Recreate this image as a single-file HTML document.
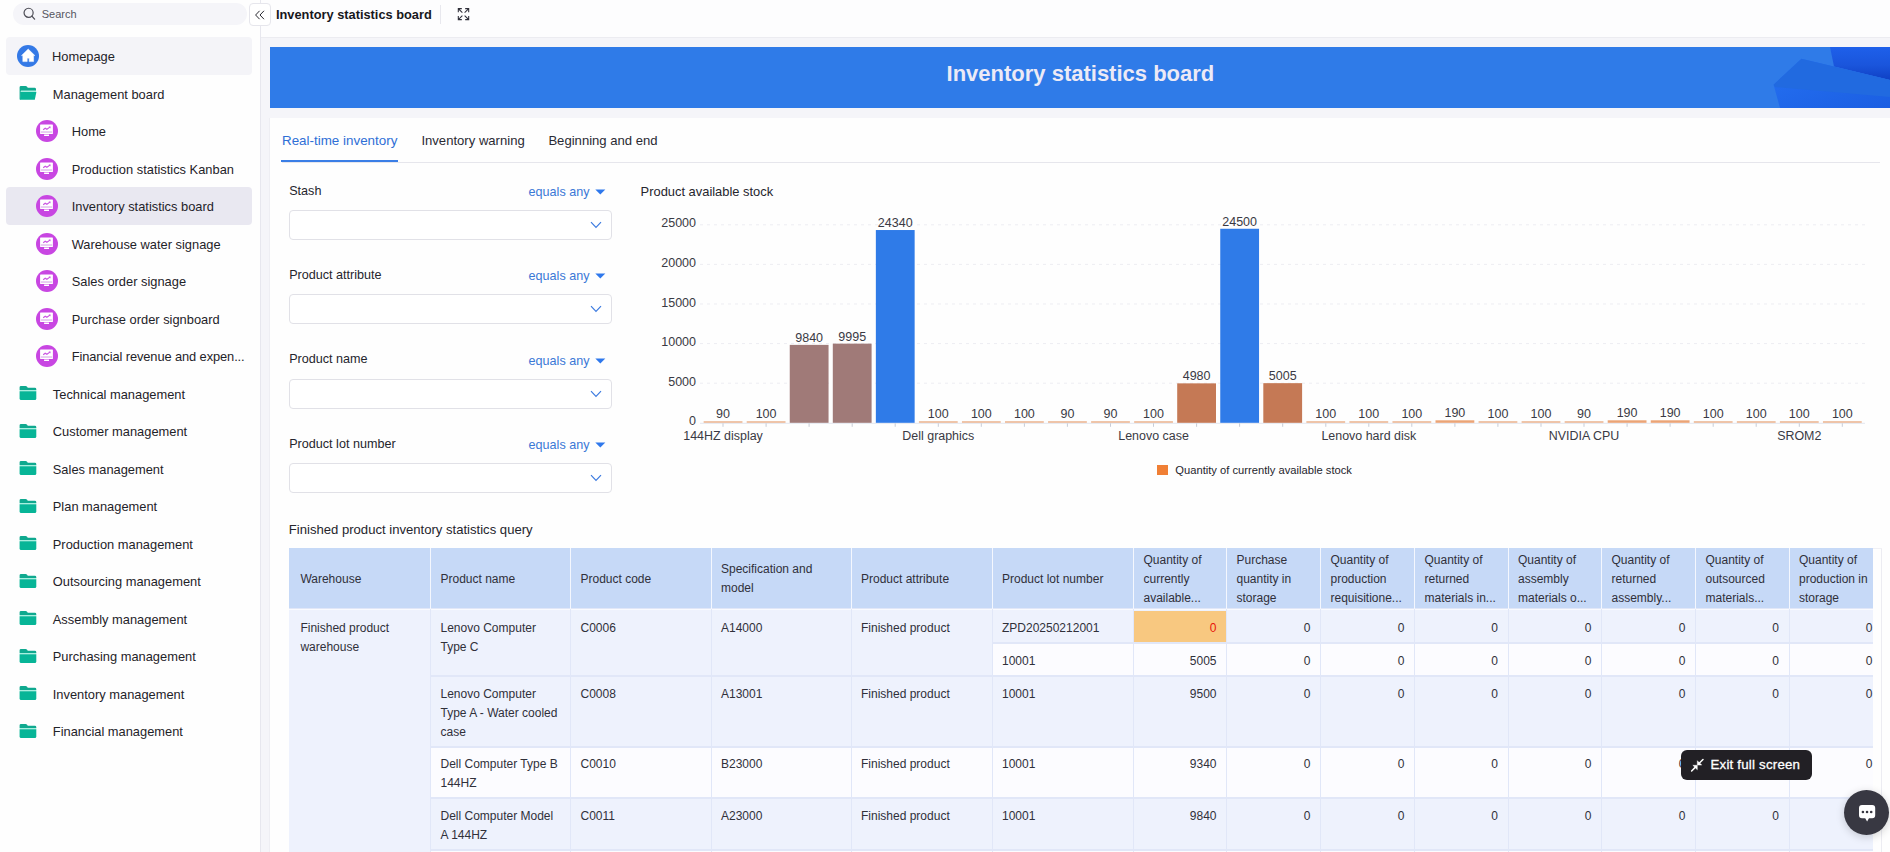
<!DOCTYPE html>
<html><head><meta charset="utf-8"><title>Inventory statistics board</title>
<style>
html,body{margin:0;padding:0;width:1890px;height:852px;overflow:hidden;background:#fefefe;}
body{position:relative;font-family:"Liberation Sans",sans-serif;}
.b{position:absolute;}
.t{position:absolute;white-space:nowrap;}
</style></head><body>
<div class="b" style="left:0px;top:0px;width:260px;height:852px;background:#fefefe;"></div>
<div class="b" style="left:260px;top:0px;width:1px;height:852px;background:#e7e7ee;"></div>
<div class="b" style="left:13px;top:2.5px;width:234px;height:22px;background:#f5f5f9;border-radius:11px;"></div>
<svg class="b" style="left:23px;top:7px" width="14" height="14" viewBox="0 0 14 14"><circle cx="5.6" cy="5.8" r="4.55" fill="none" stroke="#4d4d56" stroke-width="1.2"/><path d="M8.9 9.1 L11.6 12.1" stroke="#4d4d56" stroke-width="1.3" stroke-linecap="round"/></svg>
<div class="t" style="left:41.70px;top:6.99px;font-size:11px;line-height:15px;color:#55555f;">Search</div>
<div class="b" style="left:6px;top:37px;width:246px;height:38px;background:#f4f4f8;border-radius:4px;"></div>
<div class="b" style="left:6px;top:187px;width:246px;height:37.5px;background:#e9e8f1;border-radius:4px;"></div>
<svg class="b" style="left:17px;top:45px" width="22" height="22" viewBox="0 0 22 22"><circle cx="11" cy="11" r="11" fill="#3479e6"/><path d="M11.2 4 L17.9 10.6 L16.6 10.6 L16.6 16.6 L12.2 16.6 L12.2 13.2 L10.2 13.2 L10.2 16.6 L5.8 16.6 L5.8 10.6 L4.5 10.6 Z" fill="#fff" stroke="#fff" stroke-width="0.5" stroke-linejoin="round"/></svg>
<div class="t" style="left:52.00px;top:48.24px;font-size:12.87px;line-height:18px;color:#1f2329;">Homepage</div>
<svg class="b" style="left:18px;top:85px" width="20" height="17" viewBox="0 0 20 17"><path d="M1.6 2.3 Q1.6 0.9 3 0.9 L7.6 0.9 Q8.4 0.9 8.9 1.6 L9.8 2.8 L16.6 2.8 Q18 2.8 18 4.2 L18 5.8 L3 5.8 L2.6 14.6 L1.6 14.6 Z" fill="#0fa98f"/><path d="M2.7 5.8 L18.2 5.8 L18.2 7 L2.6 7 Z" fill="#a8efdf"/><path d="M2.7 7 L18.4 7 L16.8 14.8 L2 14.8 Z" fill="#07b597"/></svg>
<div class="t" style="left:52.80px;top:85.74px;font-size:12.87px;line-height:18px;color:#1f2329;">Management board</div>
<svg class="b" style="left:36px;top:120px" width="22" height="22" viewBox="0 0 22 22"><circle cx="11" cy="11" r="11" fill="#c846e2"/><rect x="4.1" y="4.6" width="12.8" height="9.3" rx="0.5" fill="#fff"/><rect x="4.8" y="11.1" width="11.4" height="1.9" fill="#e7cdf1"/><path d="M7.2 9.7 L9.2 8.2 L10.9 9.3 L13.9 7.1" fill="none" stroke="#c955e2" stroke-width="1.15"/><path d="M12.6 6.6 L14.6 6.6 L14.4 8.6 Z" fill="#c955e2"/><rect x="8.1" y="14.5" width="4.9" height="1.5" fill="#fff"/></svg>
<div class="t" style="left:71.70px;top:123.24px;font-size:12.87px;line-height:18px;color:#1f2329;">Home</div>
<svg class="b" style="left:36px;top:158px" width="22" height="22" viewBox="0 0 22 22"><circle cx="11" cy="11" r="11" fill="#c846e2"/><rect x="4.1" y="4.6" width="12.8" height="9.3" rx="0.5" fill="#fff"/><rect x="4.8" y="11.1" width="11.4" height="1.9" fill="#e7cdf1"/><path d="M7.2 9.7 L9.2 8.2 L10.9 9.3 L13.9 7.1" fill="none" stroke="#c955e2" stroke-width="1.15"/><path d="M12.6 6.6 L14.6 6.6 L14.4 8.6 Z" fill="#c955e2"/><rect x="8.1" y="14.5" width="4.9" height="1.5" fill="#fff"/></svg>
<div class="t" style="left:71.70px;top:160.74px;font-size:12.87px;line-height:18px;color:#1f2329;">Production statistics Kanban</div>
<svg class="b" style="left:36px;top:195px" width="22" height="22" viewBox="0 0 22 22"><circle cx="11" cy="11" r="11" fill="#c846e2"/><rect x="4.1" y="4.6" width="12.8" height="9.3" rx="0.5" fill="#fff"/><rect x="4.8" y="11.1" width="11.4" height="1.9" fill="#e7cdf1"/><path d="M7.2 9.7 L9.2 8.2 L10.9 9.3 L13.9 7.1" fill="none" stroke="#c955e2" stroke-width="1.15"/><path d="M12.6 6.6 L14.6 6.6 L14.4 8.6 Z" fill="#c955e2"/><rect x="8.1" y="14.5" width="4.9" height="1.5" fill="#fff"/></svg>
<div class="t" style="left:71.70px;top:198.24px;font-size:12.87px;line-height:18px;color:#1f2329;">Inventory statistics board</div>
<svg class="b" style="left:36px;top:233px" width="22" height="22" viewBox="0 0 22 22"><circle cx="11" cy="11" r="11" fill="#c846e2"/><rect x="4.1" y="4.6" width="12.8" height="9.3" rx="0.5" fill="#fff"/><rect x="4.8" y="11.1" width="11.4" height="1.9" fill="#e7cdf1"/><path d="M7.2 9.7 L9.2 8.2 L10.9 9.3 L13.9 7.1" fill="none" stroke="#c955e2" stroke-width="1.15"/><path d="M12.6 6.6 L14.6 6.6 L14.4 8.6 Z" fill="#c955e2"/><rect x="8.1" y="14.5" width="4.9" height="1.5" fill="#fff"/></svg>
<div class="t" style="left:71.70px;top:235.74px;font-size:12.87px;line-height:18px;color:#1f2329;">Warehouse water signage</div>
<svg class="b" style="left:36px;top:270px" width="22" height="22" viewBox="0 0 22 22"><circle cx="11" cy="11" r="11" fill="#c846e2"/><rect x="4.1" y="4.6" width="12.8" height="9.3" rx="0.5" fill="#fff"/><rect x="4.8" y="11.1" width="11.4" height="1.9" fill="#e7cdf1"/><path d="M7.2 9.7 L9.2 8.2 L10.9 9.3 L13.9 7.1" fill="none" stroke="#c955e2" stroke-width="1.15"/><path d="M12.6 6.6 L14.6 6.6 L14.4 8.6 Z" fill="#c955e2"/><rect x="8.1" y="14.5" width="4.9" height="1.5" fill="#fff"/></svg>
<div class="t" style="left:71.70px;top:273.24px;font-size:12.87px;line-height:18px;color:#1f2329;">Sales order signage</div>
<svg class="b" style="left:36px;top:308px" width="22" height="22" viewBox="0 0 22 22"><circle cx="11" cy="11" r="11" fill="#c846e2"/><rect x="4.1" y="4.6" width="12.8" height="9.3" rx="0.5" fill="#fff"/><rect x="4.8" y="11.1" width="11.4" height="1.9" fill="#e7cdf1"/><path d="M7.2 9.7 L9.2 8.2 L10.9 9.3 L13.9 7.1" fill="none" stroke="#c955e2" stroke-width="1.15"/><path d="M12.6 6.6 L14.6 6.6 L14.4 8.6 Z" fill="#c955e2"/><rect x="8.1" y="14.5" width="4.9" height="1.5" fill="#fff"/></svg>
<div class="t" style="left:71.70px;top:310.74px;font-size:12.87px;line-height:18px;color:#1f2329;">Purchase order signboard</div>
<svg class="b" style="left:36px;top:345px" width="22" height="22" viewBox="0 0 22 22"><circle cx="11" cy="11" r="11" fill="#c846e2"/><rect x="4.1" y="4.6" width="12.8" height="9.3" rx="0.5" fill="#fff"/><rect x="4.8" y="11.1" width="11.4" height="1.9" fill="#e7cdf1"/><path d="M7.2 9.7 L9.2 8.2 L10.9 9.3 L13.9 7.1" fill="none" stroke="#c955e2" stroke-width="1.15"/><path d="M12.6 6.6 L14.6 6.6 L14.4 8.6 Z" fill="#c955e2"/><rect x="8.1" y="14.5" width="4.9" height="1.5" fill="#fff"/></svg>
<div class="t" style="left:71.70px;top:348.24px;font-size:12.87px;line-height:18px;color:#1f2329;letter-spacing:-0.1px;">Financial revenue and expen...</div>
<svg class="b" style="left:18px;top:385px" width="20" height="17" viewBox="0 0 20 17"><path d="M1.6 2.3 Q1.6 0.9 3 0.9 L7.6 0.9 Q8.4 0.9 8.9 1.6 L9.8 2.8 L16.9 2.8 Q18.3 2.8 18.3 4.2 L18.3 5 L1.6 5 Z" fill="#0fa98f"/><rect x="1.6" y="5" width="16.7" height="1.3" fill="#a8efdf"/><path d="M1.6 6.3 L18.3 6.3 L18.3 13.4 Q18.3 14.9 16.8 14.9 L3.1 14.9 Q1.6 14.9 1.6 13.4 Z" fill="#07b597"/></svg>
<div class="t" style="left:52.80px;top:385.74px;font-size:12.87px;line-height:18px;color:#1f2329;">Technical management</div>
<svg class="b" style="left:18px;top:423px" width="20" height="17" viewBox="0 0 20 17"><path d="M1.6 2.3 Q1.6 0.9 3 0.9 L7.6 0.9 Q8.4 0.9 8.9 1.6 L9.8 2.8 L16.9 2.8 Q18.3 2.8 18.3 4.2 L18.3 5 L1.6 5 Z" fill="#0fa98f"/><rect x="1.6" y="5" width="16.7" height="1.3" fill="#a8efdf"/><path d="M1.6 6.3 L18.3 6.3 L18.3 13.4 Q18.3 14.9 16.8 14.9 L3.1 14.9 Q1.6 14.9 1.6 13.4 Z" fill="#07b597"/></svg>
<div class="t" style="left:52.80px;top:423.24px;font-size:12.87px;line-height:18px;color:#1f2329;">Customer management</div>
<svg class="b" style="left:18px;top:460px" width="20" height="17" viewBox="0 0 20 17"><path d="M1.6 2.3 Q1.6 0.9 3 0.9 L7.6 0.9 Q8.4 0.9 8.9 1.6 L9.8 2.8 L16.9 2.8 Q18.3 2.8 18.3 4.2 L18.3 5 L1.6 5 Z" fill="#0fa98f"/><rect x="1.6" y="5" width="16.7" height="1.3" fill="#a8efdf"/><path d="M1.6 6.3 L18.3 6.3 L18.3 13.4 Q18.3 14.9 16.8 14.9 L3.1 14.9 Q1.6 14.9 1.6 13.4 Z" fill="#07b597"/></svg>
<div class="t" style="left:52.80px;top:460.74px;font-size:12.87px;line-height:18px;color:#1f2329;">Sales management</div>
<svg class="b" style="left:18px;top:498px" width="20" height="17" viewBox="0 0 20 17"><path d="M1.6 2.3 Q1.6 0.9 3 0.9 L7.6 0.9 Q8.4 0.9 8.9 1.6 L9.8 2.8 L16.9 2.8 Q18.3 2.8 18.3 4.2 L18.3 5 L1.6 5 Z" fill="#0fa98f"/><rect x="1.6" y="5" width="16.7" height="1.3" fill="#a8efdf"/><path d="M1.6 6.3 L18.3 6.3 L18.3 13.4 Q18.3 14.9 16.8 14.9 L3.1 14.9 Q1.6 14.9 1.6 13.4 Z" fill="#07b597"/></svg>
<div class="t" style="left:52.80px;top:498.24px;font-size:12.87px;line-height:18px;color:#1f2329;">Plan management</div>
<svg class="b" style="left:18px;top:535px" width="20" height="17" viewBox="0 0 20 17"><path d="M1.6 2.3 Q1.6 0.9 3 0.9 L7.6 0.9 Q8.4 0.9 8.9 1.6 L9.8 2.8 L16.9 2.8 Q18.3 2.8 18.3 4.2 L18.3 5 L1.6 5 Z" fill="#0fa98f"/><rect x="1.6" y="5" width="16.7" height="1.3" fill="#a8efdf"/><path d="M1.6 6.3 L18.3 6.3 L18.3 13.4 Q18.3 14.9 16.8 14.9 L3.1 14.9 Q1.6 14.9 1.6 13.4 Z" fill="#07b597"/></svg>
<div class="t" style="left:52.80px;top:535.74px;font-size:12.87px;line-height:18px;color:#1f2329;">Production management</div>
<svg class="b" style="left:18px;top:573px" width="20" height="17" viewBox="0 0 20 17"><path d="M1.6 2.3 Q1.6 0.9 3 0.9 L7.6 0.9 Q8.4 0.9 8.9 1.6 L9.8 2.8 L16.9 2.8 Q18.3 2.8 18.3 4.2 L18.3 5 L1.6 5 Z" fill="#0fa98f"/><rect x="1.6" y="5" width="16.7" height="1.3" fill="#a8efdf"/><path d="M1.6 6.3 L18.3 6.3 L18.3 13.4 Q18.3 14.9 16.8 14.9 L3.1 14.9 Q1.6 14.9 1.6 13.4 Z" fill="#07b597"/></svg>
<div class="t" style="left:52.80px;top:573.24px;font-size:12.87px;line-height:18px;color:#1f2329;">Outsourcing management</div>
<svg class="b" style="left:18px;top:610px" width="20" height="17" viewBox="0 0 20 17"><path d="M1.6 2.3 Q1.6 0.9 3 0.9 L7.6 0.9 Q8.4 0.9 8.9 1.6 L9.8 2.8 L16.9 2.8 Q18.3 2.8 18.3 4.2 L18.3 5 L1.6 5 Z" fill="#0fa98f"/><rect x="1.6" y="5" width="16.7" height="1.3" fill="#a8efdf"/><path d="M1.6 6.3 L18.3 6.3 L18.3 13.4 Q18.3 14.9 16.8 14.9 L3.1 14.9 Q1.6 14.9 1.6 13.4 Z" fill="#07b597"/></svg>
<div class="t" style="left:52.80px;top:610.74px;font-size:12.87px;line-height:18px;color:#1f2329;">Assembly management</div>
<svg class="b" style="left:18px;top:648px" width="20" height="17" viewBox="0 0 20 17"><path d="M1.6 2.3 Q1.6 0.9 3 0.9 L7.6 0.9 Q8.4 0.9 8.9 1.6 L9.8 2.8 L16.9 2.8 Q18.3 2.8 18.3 4.2 L18.3 5 L1.6 5 Z" fill="#0fa98f"/><rect x="1.6" y="5" width="16.7" height="1.3" fill="#a8efdf"/><path d="M1.6 6.3 L18.3 6.3 L18.3 13.4 Q18.3 14.9 16.8 14.9 L3.1 14.9 Q1.6 14.9 1.6 13.4 Z" fill="#07b597"/></svg>
<div class="t" style="left:52.80px;top:648.24px;font-size:12.87px;line-height:18px;color:#1f2329;">Purchasing management</div>
<svg class="b" style="left:18px;top:685px" width="20" height="17" viewBox="0 0 20 17"><path d="M1.6 2.3 Q1.6 0.9 3 0.9 L7.6 0.9 Q8.4 0.9 8.9 1.6 L9.8 2.8 L16.9 2.8 Q18.3 2.8 18.3 4.2 L18.3 5 L1.6 5 Z" fill="#0fa98f"/><rect x="1.6" y="5" width="16.7" height="1.3" fill="#a8efdf"/><path d="M1.6 6.3 L18.3 6.3 L18.3 13.4 Q18.3 14.9 16.8 14.9 L3.1 14.9 Q1.6 14.9 1.6 13.4 Z" fill="#07b597"/></svg>
<div class="t" style="left:52.80px;top:685.74px;font-size:12.87px;line-height:18px;color:#1f2329;">Inventory management</div>
<svg class="b" style="left:18px;top:723px" width="20" height="17" viewBox="0 0 20 17"><path d="M1.6 2.3 Q1.6 0.9 3 0.9 L7.6 0.9 Q8.4 0.9 8.9 1.6 L9.8 2.8 L16.9 2.8 Q18.3 2.8 18.3 4.2 L18.3 5 L1.6 5 Z" fill="#0fa98f"/><rect x="1.6" y="5" width="16.7" height="1.3" fill="#a8efdf"/><path d="M1.6 6.3 L18.3 6.3 L18.3 13.4 Q18.3 14.9 16.8 14.9 L3.1 14.9 Q1.6 14.9 1.6 13.4 Z" fill="#07b597"/></svg>
<div class="t" style="left:52.80px;top:723.24px;font-size:12.87px;line-height:18px;color:#1f2329;">Financial management</div>
<div class="b" style="left:261px;top:0px;width:1629px;height:37px;background:#fdfdfe;"></div>
<div class="b" style="left:248.5px;top:3px;width:22.5px;height:23px;background:#fff;border:1px solid #e6e6ec;border-radius:4px;box-sizing:border-box;"></div>
<svg class="b" style="left:254px;top:8.5px" width="12" height="12" viewBox="0 0 12 12"><path d="M5.6 1.8 L1.6 6 L5.6 10.2 M10 1.8 L6 6 L10 10.2" fill="none" stroke="#1c1c24" stroke-width="0.95"/></svg>
<div class="t" style="left:276.00px;top:5.96px;font-size:12.8px;line-height:18px;color:#17171c;font-weight:700;">Inventory statistics board</div>
<div class="b" style="left:440px;top:5px;width:1px;height:19px;background:#e8e8ee;"></div>
<svg class="b" style="left:457px;top:7px" width="13" height="14" viewBox="0 0 13 14"><g fill="none" stroke="#30303a" stroke-width="1.05" stroke-linecap="square"><path d="M1.3 4.6 L1.3 1.6 L4.3 1.6 M1.6 1.9 L5 5.3"/><path d="M11.7 4.6 L11.7 1.6 L8.7 1.6 M11.4 1.9 L8 5.3"/><path d="M1.3 9.6 L1.3 12.6 L4.3 12.6 M1.6 12.3 L5 8.9"/><path d="M11.7 9.6 L11.7 12.6 L8.7 12.6 M11.4 12.3 L8 8.9"/></g></svg>
<div class="b" style="left:261px;top:37px;width:1629px;height:815px;background:#f5f5f9;"></div>
<div class="b" style="left:261px;top:37px;width:1629px;height:1px;background:#ececf1;"></div>
<div class="b" style="left:270px;top:47px;width:1620px;height:61px;background:#2f7be8;overflow:hidden;"></div>
<svg class="b" style="left:1760px;top:47px" width="130" height="61" viewBox="0 0 130 61"><defs><linearGradient id="g1" x1="0" y1="0" x2="0" y2="1"><stop offset="0" stop-color="#1e60ea"/><stop offset="0.55" stop-color="#1a55dc"/><stop offset="1" stop-color="#0f40c4"/></linearGradient><linearGradient id="g2" x1="0" y1="0" x2="1" y2="1"><stop offset="0" stop-color="#2571f2"/><stop offset="1" stop-color="#1b5ee2"/></linearGradient></defs><path d="M70 0 L130 0 L130 33 L74 19.5 Z" fill="url(#g1)"/><path d="M13.6 37.7 L41.4 11.7 L130 33 L130 61 L20 61 Z" fill="url(#g2)"/><path d="M13.6 37.7 L41.4 11.7 L130 33 L130 50 L15 40 Z" fill="#216ae0"/></svg>
<div class="t" style="left:880.40px;top:59.38px;font-size:22px;line-height:30px;color:#eceaf6;font-weight:700;text-align:center;width:400px;">Inventory statistics board</div>
<div class="b" style="left:269px;top:118px;width:1px;height:734px;background:#eeeef3;"></div>
<div class="b" style="left:270px;top:118px;width:1620px;height:734px;background:#fefefe;"></div>
<div class="t" style="left:282.00px;top:130.66px;font-size:13.4px;line-height:19px;color:#2f6fd6;">Real-time inventory</div>
<div class="t" style="left:421.40px;top:131.86px;font-size:13.1px;line-height:18px;color:#2a2a33;">Inventory warning</div>
<div class="t" style="left:548.40px;top:131.86px;font-size:13.1px;line-height:18px;color:#2a2a33;">Beginning and end</div>
<div class="b" style="left:282px;top:162px;width:1598px;height:1px;background:#e6e6ec;"></div>
<div class="b" style="left:281px;top:160px;width:117px;height:2px;background:#3a7ee6;"></div>
<div class="t" style="left:289.20px;top:181.53px;font-size:12.6px;line-height:18px;color:#25252d;">Stash</div>
<div class="t" style="left:528.60px;top:182.93px;font-size:12.6px;line-height:18px;color:#3b78d6;">equals any</div>
<svg class="b" style="left:595px;top:189px" width="11" height="7" viewBox="0 0 11 7"><path d="M0.3 0.4 L10.3 0.4 L5.3 5.6 Z" fill="#2f78ec"/></svg>
<div class="b" style="left:289px;top:210px;width:323px;height:30px;border:1px solid #e1e1e7;border-radius:4px;box-sizing:border-box;background:#fff;"></div>
<svg class="b" style="left:590px;top:221px" width="12" height="8" viewBox="0 0 12 8"><path d="M1 1.2 L6 6.3 L11 1.2" fill="none" stroke="#3d7be0" stroke-width="1.2"/></svg>
<div class="t" style="left:289.20px;top:265.98px;font-size:12.6px;line-height:18px;color:#25252d;">Product attribute</div>
<div class="t" style="left:528.60px;top:267.38px;font-size:12.6px;line-height:18px;color:#3b78d6;">equals any</div>
<svg class="b" style="left:595px;top:273px" width="11" height="7" viewBox="0 0 11 7"><path d="M0.3 0.4 L10.3 0.4 L5.3 5.6 Z" fill="#2f78ec"/></svg>
<div class="b" style="left:289px;top:294px;width:323px;height:30px;border:1px solid #e1e1e7;border-radius:4px;box-sizing:border-box;background:#fff;"></div>
<svg class="b" style="left:590px;top:305px" width="12" height="8" viewBox="0 0 12 8"><path d="M1 1.2 L6 6.3 L11 1.2" fill="none" stroke="#3d7be0" stroke-width="1.2"/></svg>
<div class="t" style="left:289.20px;top:350.43px;font-size:12.6px;line-height:18px;color:#25252d;">Product name</div>
<div class="t" style="left:528.60px;top:351.83px;font-size:12.6px;line-height:18px;color:#3b78d6;">equals any</div>
<svg class="b" style="left:595px;top:358px" width="11" height="7" viewBox="0 0 11 7"><path d="M0.3 0.4 L10.3 0.4 L5.3 5.6 Z" fill="#2f78ec"/></svg>
<div class="b" style="left:289px;top:379px;width:323px;height:30px;border:1px solid #e1e1e7;border-radius:4px;box-sizing:border-box;background:#fff;"></div>
<svg class="b" style="left:590px;top:390px" width="12" height="8" viewBox="0 0 12 8"><path d="M1 1.2 L6 6.3 L11 1.2" fill="none" stroke="#3d7be0" stroke-width="1.2"/></svg>
<div class="t" style="left:289.20px;top:434.88px;font-size:12.6px;line-height:18px;color:#25252d;">Product lot number</div>
<div class="t" style="left:528.60px;top:436.28px;font-size:12.6px;line-height:18px;color:#3b78d6;">equals any</div>
<svg class="b" style="left:595px;top:442px" width="11" height="7" viewBox="0 0 11 7"><path d="M0.3 0.4 L10.3 0.4 L5.3 5.6 Z" fill="#2f78ec"/></svg>
<div class="b" style="left:289px;top:463px;width:323px;height:30px;border:1px solid #e1e1e7;border-radius:4px;box-sizing:border-box;background:#fff;"></div>
<svg class="b" style="left:590px;top:474px" width="12" height="8" viewBox="0 0 12 8"><path d="M1 1.2 L6 6.3 L11 1.2" fill="none" stroke="#3d7be0" stroke-width="1.2"/></svg>
<div class="t" style="left:640.60px;top:182.83px;font-size:12.9px;line-height:18px;color:#25252d;">Product available stock</div>
<svg class="b" style="left:0px;top:0px" width="1890" height="852"><line x1="700" y1="383.2" x2="1865" y2="383.2" stroke="#ededf2" stroke-width="1" stroke-dasharray="3,4"/><line x1="700" y1="343.6" x2="1865" y2="343.6" stroke="#ededf2" stroke-width="1" stroke-dasharray="3,4"/><line x1="700" y1="304.0" x2="1865" y2="304.0" stroke="#ededf2" stroke-width="1" stroke-dasharray="3,4"/><line x1="700" y1="264.4" x2="1865" y2="264.4" stroke="#ededf2" stroke-width="1" stroke-dasharray="3,4"/><line x1="700" y1="224.8" x2="1865" y2="224.8" stroke="#ededf2" stroke-width="1" stroke-dasharray="3,4"/><line x1="700" y1="423.3" x2="1865" y2="423.3" stroke="#e3e6ef" stroke-width="1"/><rect x="703.65" y="421.20" width="38.8" height="1.60" fill="#ecb795"/><line x1="723.0" y1="423.3" x2="723.0" y2="426.8" stroke="#c8ccd6" stroke-width="1"/><rect x="746.70" y="421.20" width="38.8" height="1.60" fill="#ecb795"/><line x1="766.1" y1="423.3" x2="766.1" y2="426.8" stroke="#c8ccd6" stroke-width="1"/><rect x="789.75" y="344.87" width="38.8" height="77.93" fill="#a07a78"/><line x1="809.1" y1="423.3" x2="809.1" y2="426.8" stroke="#c8ccd6" stroke-width="1"/><rect x="832.80" y="343.64" width="38.8" height="79.16" fill="#a07a78"/><line x1="852.2" y1="423.3" x2="852.2" y2="426.8" stroke="#c8ccd6" stroke-width="1"/><rect x="875.85" y="230.03" width="38.8" height="192.77" fill="#2f7be8"/><line x1="895.2" y1="423.3" x2="895.2" y2="426.8" stroke="#c8ccd6" stroke-width="1"/><rect x="918.90" y="421.20" width="38.8" height="1.60" fill="#ecb795"/><line x1="938.3" y1="423.3" x2="938.3" y2="426.8" stroke="#c8ccd6" stroke-width="1"/><rect x="961.95" y="421.20" width="38.8" height="1.60" fill="#ecb795"/><line x1="981.3" y1="423.3" x2="981.3" y2="426.8" stroke="#c8ccd6" stroke-width="1"/><rect x="1005.00" y="421.20" width="38.8" height="1.60" fill="#ecb795"/><line x1="1024.4" y1="423.3" x2="1024.4" y2="426.8" stroke="#c8ccd6" stroke-width="1"/><rect x="1048.05" y="421.20" width="38.8" height="1.60" fill="#ecb795"/><line x1="1067.4" y1="423.3" x2="1067.4" y2="426.8" stroke="#c8ccd6" stroke-width="1"/><rect x="1091.10" y="421.20" width="38.8" height="1.60" fill="#ecb795"/><line x1="1110.5" y1="423.3" x2="1110.5" y2="426.8" stroke="#c8ccd6" stroke-width="1"/><rect x="1134.15" y="421.20" width="38.8" height="1.60" fill="#ecb795"/><line x1="1153.5" y1="423.3" x2="1153.5" y2="426.8" stroke="#c8ccd6" stroke-width="1"/><rect x="1177.20" y="383.36" width="38.8" height="39.44" fill="#c57955"/><line x1="1196.6" y1="423.3" x2="1196.6" y2="426.8" stroke="#c8ccd6" stroke-width="1"/><rect x="1220.25" y="228.76" width="38.8" height="194.04" fill="#2f7be8"/><line x1="1239.6" y1="423.3" x2="1239.6" y2="426.8" stroke="#c8ccd6" stroke-width="1"/><rect x="1263.30" y="383.16" width="38.8" height="39.64" fill="#c57955"/><line x1="1282.7" y1="423.3" x2="1282.7" y2="426.8" stroke="#c8ccd6" stroke-width="1"/><rect x="1306.35" y="421.20" width="38.8" height="1.60" fill="#ecb795"/><line x1="1325.8" y1="423.3" x2="1325.8" y2="426.8" stroke="#c8ccd6" stroke-width="1"/><rect x="1349.40" y="421.20" width="38.8" height="1.60" fill="#ecb795"/><line x1="1368.8" y1="423.3" x2="1368.8" y2="426.8" stroke="#c8ccd6" stroke-width="1"/><rect x="1392.45" y="421.20" width="38.8" height="1.60" fill="#ecb795"/><line x1="1411.8" y1="423.3" x2="1411.8" y2="426.8" stroke="#c8ccd6" stroke-width="1"/><rect x="1435.50" y="420.30" width="38.8" height="2.50" fill="#eba476"/><line x1="1454.9" y1="423.3" x2="1454.9" y2="426.8" stroke="#c8ccd6" stroke-width="1"/><rect x="1478.55" y="421.20" width="38.8" height="1.60" fill="#ecb795"/><line x1="1497.9" y1="423.3" x2="1497.9" y2="426.8" stroke="#c8ccd6" stroke-width="1"/><rect x="1521.60" y="421.20" width="38.8" height="1.60" fill="#ecb795"/><line x1="1541.0" y1="423.3" x2="1541.0" y2="426.8" stroke="#c8ccd6" stroke-width="1"/><rect x="1564.65" y="421.20" width="38.8" height="1.60" fill="#ecb795"/><line x1="1584.0" y1="423.3" x2="1584.0" y2="426.8" stroke="#c8ccd6" stroke-width="1"/><rect x="1607.70" y="420.30" width="38.8" height="2.50" fill="#eba476"/><line x1="1627.1" y1="423.3" x2="1627.1" y2="426.8" stroke="#c8ccd6" stroke-width="1"/><rect x="1650.75" y="420.30" width="38.8" height="2.50" fill="#eba476"/><line x1="1670.1" y1="423.3" x2="1670.1" y2="426.8" stroke="#c8ccd6" stroke-width="1"/><rect x="1693.80" y="421.20" width="38.8" height="1.60" fill="#ecb795"/><line x1="1713.2" y1="423.3" x2="1713.2" y2="426.8" stroke="#c8ccd6" stroke-width="1"/><rect x="1736.85" y="421.20" width="38.8" height="1.60" fill="#ecb795"/><line x1="1756.2" y1="423.3" x2="1756.2" y2="426.8" stroke="#c8ccd6" stroke-width="1"/><rect x="1779.90" y="421.20" width="38.8" height="1.60" fill="#ecb795"/><line x1="1799.3" y1="423.3" x2="1799.3" y2="426.8" stroke="#c8ccd6" stroke-width="1"/><rect x="1822.95" y="421.20" width="38.8" height="1.60" fill="#ecb795"/><line x1="1842.3" y1="423.3" x2="1842.3" y2="426.8" stroke="#c8ccd6" stroke-width="1"/></svg>
<div class="t" style="left:396.00px;top:412.47px;font-size:12.5px;line-height:18px;color:#3a3a44;text-align:right;width:300px;">0</div>
<div class="t" style="left:396.00px;top:372.87px;font-size:12.5px;line-height:18px;color:#3a3a44;text-align:right;width:300px;">5000</div>
<div class="t" style="left:396.00px;top:333.27px;font-size:12.5px;line-height:18px;color:#3a3a44;text-align:right;width:300px;">10000</div>
<div class="t" style="left:396.00px;top:293.67px;font-size:12.5px;line-height:18px;color:#3a3a44;text-align:right;width:300px;">15000</div>
<div class="t" style="left:396.00px;top:254.07px;font-size:12.5px;line-height:18px;color:#3a3a44;text-align:right;width:300px;">20000</div>
<div class="t" style="left:396.00px;top:214.47px;font-size:12.5px;line-height:18px;color:#3a3a44;text-align:right;width:300px;">25000</div>
<div class="t" style="left:523.05px;top:405.27px;font-size:12.5px;line-height:18px;color:#3a3a44;text-align:center;width:400px;">90</div>
<div class="t" style="left:566.10px;top:405.27px;font-size:12.5px;line-height:18px;color:#3a3a44;text-align:center;width:400px;">100</div>
<div class="t" style="left:609.15px;top:328.94px;font-size:12.5px;line-height:18px;color:#3a3a44;text-align:center;width:400px;">9840</div>
<div class="t" style="left:652.20px;top:327.71px;font-size:12.5px;line-height:18px;color:#3a3a44;text-align:center;width:400px;">9995</div>
<div class="t" style="left:695.25px;top:214.10px;font-size:12.5px;line-height:18px;color:#3a3a44;text-align:center;width:400px;">24340</div>
<div class="t" style="left:738.30px;top:405.27px;font-size:12.5px;line-height:18px;color:#3a3a44;text-align:center;width:400px;">100</div>
<div class="t" style="left:781.35px;top:405.27px;font-size:12.5px;line-height:18px;color:#3a3a44;text-align:center;width:400px;">100</div>
<div class="t" style="left:824.40px;top:405.27px;font-size:12.5px;line-height:18px;color:#3a3a44;text-align:center;width:400px;">100</div>
<div class="t" style="left:867.45px;top:405.27px;font-size:12.5px;line-height:18px;color:#3a3a44;text-align:center;width:400px;">90</div>
<div class="t" style="left:910.50px;top:405.27px;font-size:12.5px;line-height:18px;color:#3a3a44;text-align:center;width:400px;">90</div>
<div class="t" style="left:953.55px;top:405.27px;font-size:12.5px;line-height:18px;color:#3a3a44;text-align:center;width:400px;">100</div>
<div class="t" style="left:996.60px;top:367.43px;font-size:12.5px;line-height:18px;color:#3a3a44;text-align:center;width:400px;">4980</div>
<div class="t" style="left:1039.65px;top:212.83px;font-size:12.5px;line-height:18px;color:#3a3a44;text-align:center;width:400px;">24500</div>
<div class="t" style="left:1082.70px;top:367.23px;font-size:12.5px;line-height:18px;color:#3a3a44;text-align:center;width:400px;">5005</div>
<div class="t" style="left:1125.75px;top:405.27px;font-size:12.5px;line-height:18px;color:#3a3a44;text-align:center;width:400px;">100</div>
<div class="t" style="left:1168.80px;top:405.27px;font-size:12.5px;line-height:18px;color:#3a3a44;text-align:center;width:400px;">100</div>
<div class="t" style="left:1211.85px;top:405.27px;font-size:12.5px;line-height:18px;color:#3a3a44;text-align:center;width:400px;">100</div>
<div class="t" style="left:1254.90px;top:404.37px;font-size:12.5px;line-height:18px;color:#3a3a44;text-align:center;width:400px;">190</div>
<div class="t" style="left:1297.95px;top:405.27px;font-size:12.5px;line-height:18px;color:#3a3a44;text-align:center;width:400px;">100</div>
<div class="t" style="left:1341.00px;top:405.27px;font-size:12.5px;line-height:18px;color:#3a3a44;text-align:center;width:400px;">100</div>
<div class="t" style="left:1384.05px;top:405.27px;font-size:12.5px;line-height:18px;color:#3a3a44;text-align:center;width:400px;">90</div>
<div class="t" style="left:1427.10px;top:404.37px;font-size:12.5px;line-height:18px;color:#3a3a44;text-align:center;width:400px;">190</div>
<div class="t" style="left:1470.15px;top:404.37px;font-size:12.5px;line-height:18px;color:#3a3a44;text-align:center;width:400px;">190</div>
<div class="t" style="left:1513.20px;top:405.27px;font-size:12.5px;line-height:18px;color:#3a3a44;text-align:center;width:400px;">100</div>
<div class="t" style="left:1556.25px;top:405.27px;font-size:12.5px;line-height:18px;color:#3a3a44;text-align:center;width:400px;">100</div>
<div class="t" style="left:1599.30px;top:405.27px;font-size:12.5px;line-height:18px;color:#3a3a44;text-align:center;width:400px;">100</div>
<div class="t" style="left:1642.35px;top:405.27px;font-size:12.5px;line-height:18px;color:#3a3a44;text-align:center;width:400px;">100</div>
<div class="t" style="left:523.05px;top:428.49px;font-size:12.45px;line-height:17px;color:#3a3a44;text-align:center;width:400px;">144HZ display</div>
<div class="t" style="left:738.30px;top:428.49px;font-size:12.45px;line-height:17px;color:#3a3a44;text-align:center;width:400px;">Dell graphics</div>
<div class="t" style="left:953.55px;top:428.49px;font-size:12.45px;line-height:17px;color:#3a3a44;text-align:center;width:400px;">Lenovo case</div>
<div class="t" style="left:1168.80px;top:428.49px;font-size:12.45px;line-height:17px;color:#3a3a44;text-align:center;width:400px;">Lenovo hard disk</div>
<div class="t" style="left:1384.05px;top:428.49px;font-size:12.45px;line-height:17px;color:#3a3a44;text-align:center;width:400px;">NVIDIA CPU</div>
<div class="t" style="left:1599.30px;top:428.49px;font-size:12.45px;line-height:17px;color:#3a3a44;text-align:center;width:400px;">SROM2</div>
<div class="b" style="left:1157px;top:465px;width:11px;height:10px;background:#f07f35;"></div>
<div class="t" style="left:1175.30px;top:461.82px;font-size:11.2px;line-height:16px;color:#25252d;">Quantity of currently available stock</div>
<div class="t" style="left:288.80px;top:521.06px;font-size:13.1px;line-height:18px;color:#25252d;">Finished product inventory statistics query</div>
<div class="b" style="left:289px;top:548px;width:1584px;height:304px;overflow:hidden;">
<div class="b" style="left:0.00px;top:0.00px;width:1600.00px;height:61.00px;background:#c6d9f7;"></div>
<div class="t" style="left:11.40px;top:21.54px;font-size:12px;line-height:19px;color:#30303a;">Warehouse</div>
<div class="t" style="left:151.50px;top:21.54px;font-size:12px;line-height:19px;color:#30303a;">Product name</div>
<div class="t" style="left:291.50px;top:21.54px;font-size:12px;line-height:19px;color:#30303a;">Product code</div>
<div class="t" style="left:432.00px;top:12.04px;font-size:12px;line-height:19px;color:#30303a;">Specification and</div>
<div class="t" style="left:432.00px;top:31.04px;font-size:12px;line-height:19px;color:#30303a;">model</div>
<div class="t" style="left:572.00px;top:21.54px;font-size:12px;line-height:19px;color:#30303a;">Product attribute</div>
<div class="t" style="left:713.00px;top:21.54px;font-size:12px;line-height:19px;color:#30303a;">Product lot number</div>
<div class="t" style="left:854.50px;top:2.54px;font-size:12px;line-height:19px;color:#30303a;">Quantity of</div>
<div class="t" style="left:854.50px;top:21.54px;font-size:12px;line-height:19px;color:#30303a;">currently</div>
<div class="t" style="left:854.50px;top:40.54px;font-size:12px;line-height:19px;color:#30303a;">available...</div>
<div class="t" style="left:947.50px;top:2.54px;font-size:12px;line-height:19px;color:#30303a;">Purchase</div>
<div class="t" style="left:947.50px;top:21.54px;font-size:12px;line-height:19px;color:#30303a;">quantity in</div>
<div class="t" style="left:947.50px;top:40.54px;font-size:12px;line-height:19px;color:#30303a;">storage</div>
<div class="t" style="left:1041.50px;top:2.54px;font-size:12px;line-height:19px;color:#30303a;">Quantity of</div>
<div class="t" style="left:1041.50px;top:21.54px;font-size:12px;line-height:19px;color:#30303a;">production</div>
<div class="t" style="left:1041.50px;top:40.54px;font-size:12px;line-height:19px;color:#30303a;">requisitione...</div>
<div class="t" style="left:1135.50px;top:2.54px;font-size:12px;line-height:19px;color:#30303a;">Quantity of</div>
<div class="t" style="left:1135.50px;top:21.54px;font-size:12px;line-height:19px;color:#30303a;">returned</div>
<div class="t" style="left:1135.50px;top:40.54px;font-size:12px;line-height:19px;color:#30303a;">materials in...</div>
<div class="t" style="left:1229.00px;top:2.54px;font-size:12px;line-height:19px;color:#30303a;">Quantity of</div>
<div class="t" style="left:1229.00px;top:21.54px;font-size:12px;line-height:19px;color:#30303a;">assembly</div>
<div class="t" style="left:1229.00px;top:40.54px;font-size:12px;line-height:19px;color:#30303a;">materials o...</div>
<div class="t" style="left:1322.50px;top:2.54px;font-size:12px;line-height:19px;color:#30303a;">Quantity of</div>
<div class="t" style="left:1322.50px;top:21.54px;font-size:12px;line-height:19px;color:#30303a;">returned</div>
<div class="t" style="left:1322.50px;top:40.54px;font-size:12px;line-height:19px;color:#30303a;">assembly...</div>
<div class="t" style="left:1416.50px;top:2.54px;font-size:12px;line-height:19px;color:#30303a;">Quantity of</div>
<div class="t" style="left:1416.50px;top:21.54px;font-size:12px;line-height:19px;color:#30303a;">outsourced</div>
<div class="t" style="left:1416.50px;top:40.54px;font-size:12px;line-height:19px;color:#30303a;">materials...</div>
<div class="t" style="left:1510.00px;top:2.54px;font-size:12px;line-height:19px;color:#30303a;">Quantity of</div>
<div class="t" style="left:1510.00px;top:21.54px;font-size:12px;line-height:19px;color:#30303a;">production in</div>
<div class="t" style="left:1510.00px;top:40.54px;font-size:12px;line-height:19px;color:#30303a;">storage</div>
<div class="b" style="left:0.00px;top:61.00px;width:1600.00px;height:243.00px;background:#eef2fd;"></div>
<div class="b" style="left:703.00px;top:95.00px;width:900.00px;height:33.00px;background:#fcfcff;"></div>
<div class="b" style="left:141.50px;top:199.00px;width:1460.00px;height:51.00px;background:#fcfcff;"></div>
<div class="b" style="left:141.50px;top:302.00px;width:1460.00px;height:10.00px;background:#fcfcff;"></div>
<div class="b" style="left:844.50px;top:62.50px;width:93.00px;height:32.00px;background:#f8c880;"></div>
<div class="b" style="left:0.00px;top:60.00px;width:1600.00px;height:1.50px;background:#e1e7f8;"></div>
<div class="b" style="left:703.00px;top:94.00px;width:1600.00px;height:2.00px;background:#e1e7f8;"></div>
<div class="b" style="left:141.50px;top:127.00px;width:1600.00px;height:2.00px;background:#e1e7f8;"></div>
<div class="b" style="left:141.50px;top:198.00px;width:1600.00px;height:2.00px;background:#e1e7f8;"></div>
<div class="b" style="left:141.50px;top:249.00px;width:1600.00px;height:2.00px;background:#e1e7f8;"></div>
<div class="b" style="left:141.50px;top:301.00px;width:1600.00px;height:2.00px;background:#e1e7f8;"></div>
<div class="b" style="left:0.00px;top:60.60px;width:1600.00px;height:1.60px;background:#fafbff;"></div>
<div class="b" style="left:141.00px;top:0.00px;width:1.00px;height:61.00px;background:#f4f7fe;"></div>
<div class="b" style="left:141.00px;top:61.00px;width:1.00px;height:243.00px;background:#e1e7f8;"></div>
<div class="b" style="left:281.00px;top:0.00px;width:1.00px;height:61.00px;background:#f4f7fe;"></div>
<div class="b" style="left:281.00px;top:61.00px;width:1.00px;height:243.00px;background:#e1e7f8;"></div>
<div class="b" style="left:421.50px;top:0.00px;width:1.00px;height:61.00px;background:#f4f7fe;"></div>
<div class="b" style="left:421.50px;top:61.00px;width:1.00px;height:243.00px;background:#e1e7f8;"></div>
<div class="b" style="left:561.50px;top:0.00px;width:1.00px;height:61.00px;background:#f4f7fe;"></div>
<div class="b" style="left:561.50px;top:61.00px;width:1.00px;height:243.00px;background:#e1e7f8;"></div>
<div class="b" style="left:702.50px;top:0.00px;width:1.00px;height:61.00px;background:#f4f7fe;"></div>
<div class="b" style="left:702.50px;top:61.00px;width:1.00px;height:243.00px;background:#e1e7f8;"></div>
<div class="b" style="left:844.00px;top:0.00px;width:1.00px;height:61.00px;background:#f4f7fe;"></div>
<div class="b" style="left:844.00px;top:61.00px;width:1.00px;height:243.00px;background:#e1e7f8;"></div>
<div class="b" style="left:937.00px;top:0.00px;width:1.00px;height:61.00px;background:#f4f7fe;"></div>
<div class="b" style="left:937.00px;top:61.00px;width:1.00px;height:243.00px;background:#e1e7f8;"></div>
<div class="b" style="left:1031.00px;top:0.00px;width:1.00px;height:61.00px;background:#f4f7fe;"></div>
<div class="b" style="left:1031.00px;top:61.00px;width:1.00px;height:243.00px;background:#e1e7f8;"></div>
<div class="b" style="left:1125.00px;top:0.00px;width:1.00px;height:61.00px;background:#f4f7fe;"></div>
<div class="b" style="left:1125.00px;top:61.00px;width:1.00px;height:243.00px;background:#e1e7f8;"></div>
<div class="b" style="left:1218.50px;top:0.00px;width:1.00px;height:61.00px;background:#f4f7fe;"></div>
<div class="b" style="left:1218.50px;top:61.00px;width:1.00px;height:243.00px;background:#e1e7f8;"></div>
<div class="b" style="left:1312.00px;top:0.00px;width:1.00px;height:61.00px;background:#f4f7fe;"></div>
<div class="b" style="left:1312.00px;top:61.00px;width:1.00px;height:243.00px;background:#e1e7f8;"></div>
<div class="b" style="left:1406.00px;top:0.00px;width:1.00px;height:61.00px;background:#f4f7fe;"></div>
<div class="b" style="left:1406.00px;top:61.00px;width:1.00px;height:243.00px;background:#e1e7f8;"></div>
<div class="b" style="left:1499.50px;top:0.00px;width:1.00px;height:61.00px;background:#f4f7fe;"></div>
<div class="b" style="left:1499.50px;top:61.00px;width:1.00px;height:243.00px;background:#e1e7f8;"></div>
<div class="b" style="left:1593.00px;top:0.00px;width:1.00px;height:61.00px;background:#f4f7fe;"></div>
<div class="b" style="left:1593.00px;top:61.00px;width:1.00px;height:243.00px;background:#e1e7f8;"></div>
<div class="t" style="left:11.40px;top:71.34px;font-size:12px;line-height:19px;color:#30303a;">Finished product</div>
<div class="t" style="left:11.40px;top:90.34px;font-size:12px;line-height:19px;color:#30303a;">warehouse</div>
<div class="t" style="left:151.50px;top:71.34px;font-size:12px;line-height:19px;color:#30303a;">Lenovo Computer</div>
<div class="t" style="left:151.50px;top:90.34px;font-size:12px;line-height:19px;color:#30303a;">Type C</div>
<div class="t" style="left:291.50px;top:71.34px;font-size:12px;line-height:19px;color:#30303a;">C0006</div>
<div class="t" style="left:432.00px;top:71.34px;font-size:12px;line-height:19px;color:#30303a;">A14000</div>
<div class="t" style="left:572.00px;top:71.34px;font-size:12px;line-height:19px;color:#30303a;">Finished product</div>
<div class="t" style="left:713.00px;top:71.34px;font-size:12px;line-height:19px;color:#30303a;">ZPD20250212001</div>
<div class="t" style="left:627.50px;top:71.34px;font-size:12px;line-height:19px;color:#e8140a;text-align:right;width:300px;">0</div>
<div class="t" style="left:721.50px;top:71.34px;font-size:12px;line-height:19px;color:#30303a;text-align:right;width:300px;">0</div>
<div class="t" style="left:815.50px;top:71.34px;font-size:12px;line-height:19px;color:#30303a;text-align:right;width:300px;">0</div>
<div class="t" style="left:909.00px;top:71.34px;font-size:12px;line-height:19px;color:#30303a;text-align:right;width:300px;">0</div>
<div class="t" style="left:1002.50px;top:71.34px;font-size:12px;line-height:19px;color:#30303a;text-align:right;width:300px;">0</div>
<div class="t" style="left:1096.50px;top:71.34px;font-size:12px;line-height:19px;color:#30303a;text-align:right;width:300px;">0</div>
<div class="t" style="left:1190.00px;top:71.34px;font-size:12px;line-height:19px;color:#30303a;text-align:right;width:300px;">0</div>
<div class="t" style="left:1283.50px;top:71.34px;font-size:12px;line-height:19px;color:#30303a;text-align:right;width:300px;">0</div>
<div class="t" style="left:713.00px;top:104.34px;font-size:12px;line-height:19px;color:#30303a;">10001</div>
<div class="t" style="left:627.50px;top:104.34px;font-size:12px;line-height:19px;color:#30303a;text-align:right;width:300px;">5005</div>
<div class="t" style="left:721.50px;top:104.34px;font-size:12px;line-height:19px;color:#30303a;text-align:right;width:300px;">0</div>
<div class="t" style="left:815.50px;top:104.34px;font-size:12px;line-height:19px;color:#30303a;text-align:right;width:300px;">0</div>
<div class="t" style="left:909.00px;top:104.34px;font-size:12px;line-height:19px;color:#30303a;text-align:right;width:300px;">0</div>
<div class="t" style="left:1002.50px;top:104.34px;font-size:12px;line-height:19px;color:#30303a;text-align:right;width:300px;">0</div>
<div class="t" style="left:1096.50px;top:104.34px;font-size:12px;line-height:19px;color:#30303a;text-align:right;width:300px;">0</div>
<div class="t" style="left:1190.00px;top:104.34px;font-size:12px;line-height:19px;color:#30303a;text-align:right;width:300px;">0</div>
<div class="t" style="left:1283.50px;top:104.34px;font-size:12px;line-height:19px;color:#30303a;text-align:right;width:300px;">0</div>
<div class="t" style="left:151.50px;top:137.34px;font-size:12px;line-height:19px;color:#30303a;">Lenovo Computer</div>
<div class="t" style="left:151.50px;top:156.34px;font-size:12px;line-height:19px;color:#30303a;">Type A - Water cooled</div>
<div class="t" style="left:151.50px;top:175.34px;font-size:12px;line-height:19px;color:#30303a;">case</div>
<div class="t" style="left:291.50px;top:137.34px;font-size:12px;line-height:19px;color:#30303a;">C0008</div>
<div class="t" style="left:432.00px;top:137.34px;font-size:12px;line-height:19px;color:#30303a;">A13001</div>
<div class="t" style="left:572.00px;top:137.34px;font-size:12px;line-height:19px;color:#30303a;">Finished product</div>
<div class="t" style="left:713.00px;top:137.34px;font-size:12px;line-height:19px;color:#30303a;">10001</div>
<div class="t" style="left:627.50px;top:137.34px;font-size:12px;line-height:19px;color:#30303a;text-align:right;width:300px;">9500</div>
<div class="t" style="left:721.50px;top:137.34px;font-size:12px;line-height:19px;color:#30303a;text-align:right;width:300px;">0</div>
<div class="t" style="left:815.50px;top:137.34px;font-size:12px;line-height:19px;color:#30303a;text-align:right;width:300px;">0</div>
<div class="t" style="left:909.00px;top:137.34px;font-size:12px;line-height:19px;color:#30303a;text-align:right;width:300px;">0</div>
<div class="t" style="left:1002.50px;top:137.34px;font-size:12px;line-height:19px;color:#30303a;text-align:right;width:300px;">0</div>
<div class="t" style="left:1096.50px;top:137.34px;font-size:12px;line-height:19px;color:#30303a;text-align:right;width:300px;">0</div>
<div class="t" style="left:1190.00px;top:137.34px;font-size:12px;line-height:19px;color:#30303a;text-align:right;width:300px;">0</div>
<div class="t" style="left:1283.50px;top:137.34px;font-size:12px;line-height:19px;color:#30303a;text-align:right;width:300px;">0</div>
<div class="t" style="left:151.50px;top:207.34px;font-size:12px;line-height:19px;color:#30303a;">Dell Computer Type B</div>
<div class="t" style="left:151.50px;top:226.34px;font-size:12px;line-height:19px;color:#30303a;">144HZ</div>
<div class="t" style="left:291.50px;top:207.34px;font-size:12px;line-height:19px;color:#30303a;">C0010</div>
<div class="t" style="left:432.00px;top:207.34px;font-size:12px;line-height:19px;color:#30303a;">B23000</div>
<div class="t" style="left:572.00px;top:207.34px;font-size:12px;line-height:19px;color:#30303a;">Finished product</div>
<div class="t" style="left:713.00px;top:207.34px;font-size:12px;line-height:19px;color:#30303a;">10001</div>
<div class="t" style="left:627.50px;top:207.34px;font-size:12px;line-height:19px;color:#30303a;text-align:right;width:300px;">9340</div>
<div class="t" style="left:721.50px;top:207.34px;font-size:12px;line-height:19px;color:#30303a;text-align:right;width:300px;">0</div>
<div class="t" style="left:815.50px;top:207.34px;font-size:12px;line-height:19px;color:#30303a;text-align:right;width:300px;">0</div>
<div class="t" style="left:909.00px;top:207.34px;font-size:12px;line-height:19px;color:#30303a;text-align:right;width:300px;">0</div>
<div class="t" style="left:1002.50px;top:207.34px;font-size:12px;line-height:19px;color:#30303a;text-align:right;width:300px;">0</div>
<div class="t" style="left:1096.50px;top:207.34px;font-size:12px;line-height:19px;color:#30303a;text-align:right;width:300px;">0</div>
<div class="t" style="left:1190.00px;top:207.34px;font-size:12px;line-height:19px;color:#30303a;text-align:right;width:300px;">0</div>
<div class="t" style="left:1283.50px;top:207.34px;font-size:12px;line-height:19px;color:#30303a;text-align:right;width:300px;">0</div>
<div class="t" style="left:151.50px;top:259.34px;font-size:12px;line-height:19px;color:#30303a;">Dell Computer Model</div>
<div class="t" style="left:151.50px;top:278.34px;font-size:12px;line-height:19px;color:#30303a;">A 144HZ</div>
<div class="t" style="left:291.50px;top:259.34px;font-size:12px;line-height:19px;color:#30303a;">C0011</div>
<div class="t" style="left:432.00px;top:259.34px;font-size:12px;line-height:19px;color:#30303a;">A23000</div>
<div class="t" style="left:572.00px;top:259.34px;font-size:12px;line-height:19px;color:#30303a;">Finished product</div>
<div class="t" style="left:713.00px;top:259.34px;font-size:12px;line-height:19px;color:#30303a;">10001</div>
<div class="t" style="left:627.50px;top:259.34px;font-size:12px;line-height:19px;color:#30303a;text-align:right;width:300px;">9840</div>
<div class="t" style="left:721.50px;top:259.34px;font-size:12px;line-height:19px;color:#30303a;text-align:right;width:300px;">0</div>
<div class="t" style="left:815.50px;top:259.34px;font-size:12px;line-height:19px;color:#30303a;text-align:right;width:300px;">0</div>
<div class="t" style="left:909.00px;top:259.34px;font-size:12px;line-height:19px;color:#30303a;text-align:right;width:300px;">0</div>
<div class="t" style="left:1002.50px;top:259.34px;font-size:12px;line-height:19px;color:#30303a;text-align:right;width:300px;">0</div>
<div class="t" style="left:1096.50px;top:259.34px;font-size:12px;line-height:19px;color:#30303a;text-align:right;width:300px;">0</div>
<div class="t" style="left:1190.00px;top:259.34px;font-size:12px;line-height:19px;color:#30303a;text-align:right;width:300px;">0</div>
<div class="t" style="left:1283.50px;top:259.34px;font-size:12px;line-height:19px;color:#30303a;text-align:right;width:300px;">0</div>
</div>
<div class="b" style="left:1881px;top:548px;width:1px;height:304px;background:#ececf2;"></div>
<div class="b" style="left:1873px;top:548px;width:9px;height:1px;background:#f0f0f5;"></div>
<div class="b" style="left:1681px;top:750px;width:131px;height:30px;background:#222025;border-radius:6px;"></div>
<svg class="b" style="left:1688px;top:756px" width="18" height="18" viewBox="0 0 18 18"><g transform="translate(9.3 9.1) scale(0.86) translate(-9 -9)"><path d="M9 3.8 L9 9 L14.2 9 Z" fill="#fff" stroke="#fff" stroke-width="0.5" stroke-linejoin="round"/><path d="M10.6 7.4 L15.6 2.4" stroke="#fff" stroke-width="1.7" stroke-linecap="round"/><path d="M3.8 9.2 L9 9.2 L9 14.4 Z" fill="#fff" stroke="#fff" stroke-width="0.5" stroke-linejoin="round"/><path d="M7.4 10.8 L2.4 15.8" stroke="#fff" stroke-width="1.8" stroke-linecap="round"/></g></svg>
<div class="t" style="left:1710.50px;top:755.29px;font-size:13.3px;line-height:19px;color:#ffffff;letter-spacing:0.2px;-webkit-text-stroke:0.3px #fff;">Exit full screen</div>
<div class="b" style="left:1844px;top:790px;width:45px;height:45px;border-radius:50%;background:#383842;box-shadow:0 2px 8px rgba(0,0,0,0.18);"></div>
<svg class="b" style="left:1858px;top:804px" width="19" height="19" viewBox="0 0 19 19"><path d="M4 1 L14.2 1 Q17.2 1 17.2 4 L17.2 11.3 Q17.2 14.3 14.2 14.3 L11 14.3 L9.1 17.6 L7.2 14.3 L4 14.3 Q1 14.3 1 11.3 L1 4 Q1 1 4 1 Z" fill="#fff"/><circle cx="4.9" cy="8" r="1.3" fill="#383842"/><circle cx="9.05" cy="8" r="1.3" fill="#383842"/><circle cx="13.2" cy="8" r="1.3" fill="#383842"/></svg>
</body></html>
